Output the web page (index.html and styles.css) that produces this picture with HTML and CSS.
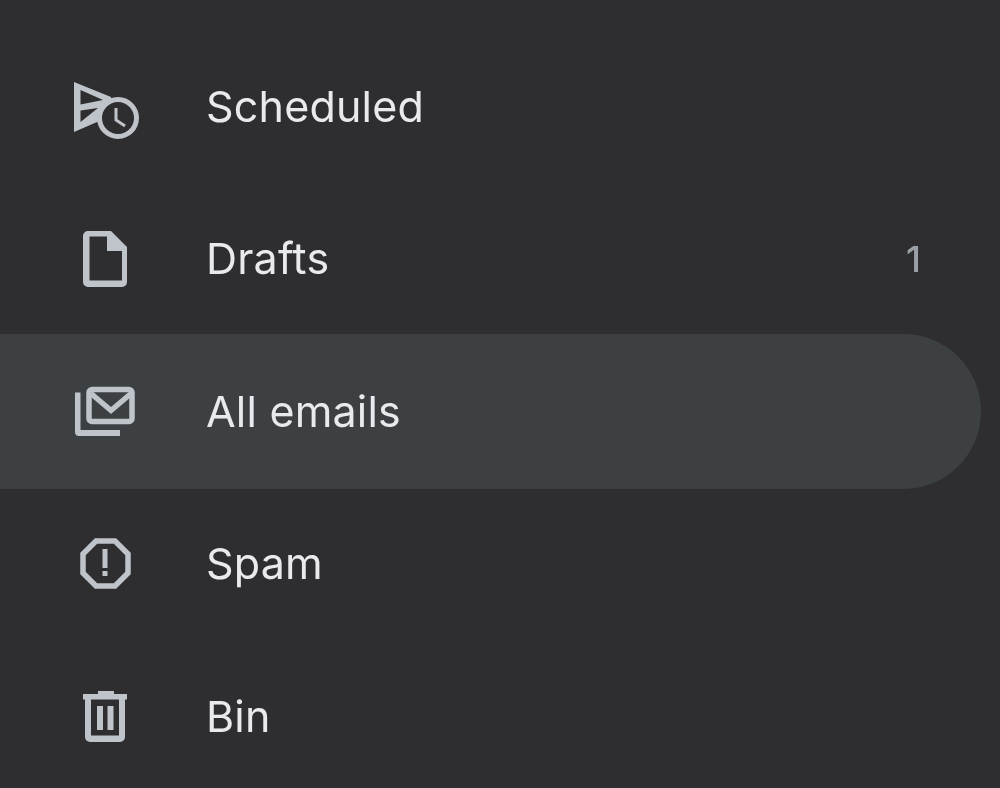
FILE: index.html
```html
<!DOCTYPE html>
<html lang="en">
<head>
<meta charset="utf-8">
<title>Mail navigation</title>
<link rel="stylesheet" href="styles.css">
</head>
<body>
<nav class="nav">
  <a class="row">
    <svg class="icon" viewBox="0 0 76 76">
      <path class="solid" fill-rule="evenodd" d="M7 13L44 28V47L7 63ZM13.500 21V35.500L36 31ZM13.500 41.500V53L31 39Z"/>
      <circle class="clock" cx="51" cy="49" r="18.500"/>
      <path class="line" d="M49 39V51L58 57"/>
    </svg>
    <span class="label">Scheduled</span>
  </a>
  <a class="row">
    <svg class="icon" viewBox="0 0 76 76">
      <path class="solid" fill-rule="evenodd" d="M21 10H44L60 26V61A5 5 0 0 1 55 66H21A5 5 0 0 1 16 61V15A5 5 0 0 1 21 10ZM22.500 15.500V59.500H55V30H40V15.500Z"/>
    </svg>
    <span class="label">Drafts</span>
    <span class="count">1</span>
  </a>
  <a class="row active">
    <svg class="icon" viewBox="0 0 76 76">
      <path class="solid" d="M8 18.500H13.500V56H53V62H12A4 4 0 0 1 8 58.500Z"/>
      <rect class="stroke" x="22" y="15.500" width="43" height="32" rx="3"/>
      <path class="stroke" d="M24 19.500L44 36.500L64 19.500"/>
    </svg>
    <span class="label">All emails</span>
  </a>
  <a class="row">
    <svg class="icon" viewBox="0 0 76 76">
      <path class="stroke" d="M29 15H48L61 28V47L48 60H29L16 47V28Z"/>
      <path class="solid" d="M35.500 23H40.500V42H35.500ZM35.500 45H40.500V50H35.500Z"/>
    </svg>
    <span class="label">Spam</span>
  </a>
  <a class="row">
    <svg class="icon" viewBox="0 0 76 76">
      <path class="solid" fill-rule="evenodd" d="M31 15V12H47V15H60V20.500H58V58A5 5 0 0 1 53 63H23A5 5 0 0 1 18 58V20.500H16V15ZM24 20.500V56.500H52V20.500Z"/>
      <path class="solid" d="M30 27H36V51H30ZM40.500 27H46.500V51H40.500Z"/>
    </svg>
    <span class="label">Bin</span>
  </a>
</nav>
</body>
</html>
```
FILE: styles.css
```css
html, body {
  margin: 0;
  height: 100%;
  background: #2e2e30;
}
body {
  overflow: hidden;
  font-family: Inter, "Open Sans", sans-serif;
}
.nav {
  display: flex;
  flex-direction: column;
  width: 981px;
  padding-top: 29px;
  filter: blur(0.6px);
}
.row {
  display: flex;
  align-items: center;
  height: 155px;
  margin-bottom: -2.500px;
  padding: 0 60px 0 67px;
  border-radius: 0 78px 78px 0;
  color: #e8eaed;
  box-sizing: border-box;
}
.active {
  background: #3c4043;
}
.icon {
  flex: none;
  width: 76px;
  height: 76px;
}
.solid {
  fill: #bfc3ca;
}
.stroke {
  fill: none;
  stroke: #bfc3ca;
  stroke-width: 5.500;
}
.clock {
  fill: #2e2e30;
  stroke: #bfc3ca;
  stroke-width: 5;
}
.line {
  fill: none;
  stroke: #bfc3ca;
  stroke-width: 3;
}
.label {
  margin-left: 63px;
  padding-bottom: 2px;
  flex: 1;
  font-size: 43px;
  font-weight: 400;
  line-height: 60px;
  letter-spacing: 0.2px;
}
.count {
  font-size: 36px;
  font-weight: 500;
  color: #9aa0a6;
}
```
